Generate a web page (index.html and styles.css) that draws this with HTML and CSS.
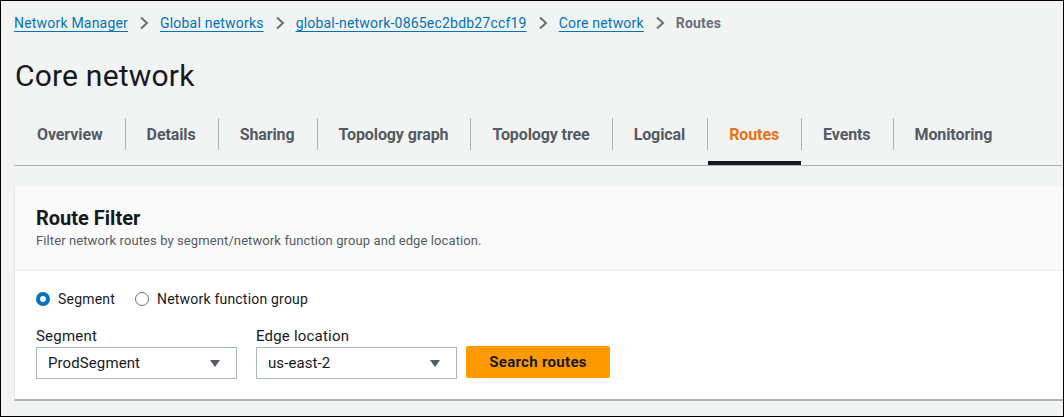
FILE: index.html
```html
<!DOCTYPE html>
<html lang="en">

<head>
  <meta charset="UTF-8" />
  <meta name="viewport" content="width=device-width, initial-scale=1.0" />
  <title>Core network - Routes</title>
  <link rel="stylesheet" href="styles.css">
</head>

<body>
  <div class="page">
    <!-- breadcrumbs -->
    <div class="crumbs">
      <a href="javascript:;">Network Manager</a>
      <span class="chev"><svg width="10" height="14" viewBox="0 0 10 14"><path d="M2 1.5 L8 7 L2 12.5" fill="none" stroke="#687078" stroke-width="2"/></svg></span>
      <a href="javascript:;">Global networks</a>
      <span class="chev"><svg width="10" height="14" viewBox="0 0 10 14"><path d="M2 1.5 L8 7 L2 12.5" fill="none" stroke="#687078" stroke-width="2"/></svg></span>
      <a href="javascript:;">global-network-0865ec2bdb27ccf19</a>
      <span class="chev"><svg width="10" height="14" viewBox="0 0 10 14"><path d="M2 1.5 L8 7 L2 12.5" fill="none" stroke="#687078" stroke-width="2"/></svg></span>
      <a href="javascript:;">Core network</a>
      <span class="chev"><svg width="10" height="14" viewBox="0 0 10 14"><path d="M2 1.5 L8 7 L2 12.5" fill="none" stroke="#687078" stroke-width="2"/></svg></span>
      <span class="current">Routes</span>
    </div>

    <h1 class="title">Core network</h1>

    <!-- tabs -->
    <ul class="tabs">
      <li><a href="javascript:;">Overview</a></li>
      <li><a href="javascript:;">Details</a></li>
      <li><a href="javascript:;">Sharing</a></li>
      <li><a href="javascript:;">Topology graph</a></li>
      <li><a href="javascript:;">Topology tree</a></li>
      <li><a href="javascript:;">Logical</a></li>
      <li class="active"><a href="javascript:;">Routes</a></li>
      <li><a href="javascript:;">Events</a></li>
      <li><a href="javascript:;">Monitoring</a></li>
    </ul>

    <!-- filter card -->
    <div class="card">
      <div class="card-head">
        <h2>Route Filter</h2>
        <p>Filter network routes by segment/network function group and edge location.</p>
      </div>
      <div class="card-body">
        <div class="radios">
          <label class="radio checked"><span class="dot"></span>Segment</label>
          <label class="radio"><span class="dot"></span>Network function group</label>
        </div>
        <div class="fields">
          <div class="field">
            <div class="label">Segment</div>
            <div class="select">ProdSegment<span class="caret"></span></div>
          </div>
          <div class="field">
            <div class="label">Edge location</div>
            <div class="select">us-east-2<span class="caret"></span></div>
          </div>
          <button class="btn">Search routes</button>
        </div>
      </div>
    </div>
  </div>
</body>

</html>
```

FILE: styles.css
```css
* {
  margin: 0;
  padding: 0;
  box-sizing: border-box;
}

body {
  width: 1064px;
  height: 417px;
  overflow: hidden;
  font-family: Roboto, "Liberation Sans", sans-serif;
  color: #16191f;
}

.page {
  height: 417px;
  border: 1px solid #000;
  background: #f2f3f3;
  padding-left: 13px;
  overflow: hidden;
}

/* breadcrumbs */
.crumbs {
  display: flex;
  align-items: center;
  height: 44px;
  font-size: 14px;
  letter-spacing: 0.2px;
}

.crumbs a {
  color: #0073bb;
  text-decoration: underline;
  text-underline-offset: 3px;
}

.crumbs .chev {
  display: flex;
  margin: 0 11px;
}

.crumbs .current {
  color: #687078;
  font-weight: bold;
}

.title {
  font-size: 30px;
  font-weight: normal;
  letter-spacing: 0.2px;
  line-height: 36px;
  margin-top: 13px;
  margin-left: 1px;
}

/* tabs */
.tabs {
  list-style: none;
  display: flex;
  margin-top: 14px;
  height: 58px;
  padding-top: 10px;
  border-bottom: 1px solid #aab7b8;
}

.tabs li {
  position: relative;
  padding: 7px 22px 0;
  height: 47px;
}

.tabs li:first-child {
  margin-left: 1px;
}

.tabs li:not(:first-child) {
  background: linear-gradient(#aab7b8, #aab7b8) no-repeat left top / 1px 32px;
}

.tabs li a {
  display: block;
  line-height: 20px;
  text-decoration: none;
  color: #545b64;
  font-size: 16px;
  font-weight: bold;
  letter-spacing: -0.1px;
}

.tabs li.active a {
  color: #ec7211;
}

.tabs li.active::after {
  content: "";
  position: absolute;
  left: 1px;
  right: 0;
  bottom: 0;
  height: 4px;
  background: #16191f;
}

/* card */
.card {
  margin-top: 21px;
  background: #fff;
  border-left: 1px solid #e4e6e6;
  border-bottom: 2px solid #aab7b8;
  margin-right: -4px;
}

.card-head {
  background: #fafafa;
  padding: 19px 21px 0;
  border-bottom: 1px solid #eaeded;
  height: 84px;
}

.card-head h2 {
  font-size: 20px;
  font-weight: bold;
  line-height: 24px;
}

.card-head p {
  font-size: 13px;
  color: #545b64;
  line-height: 18px;
  margin-top: 2px;
  letter-spacing: 0.1px;
}

.card-body {
  padding: 18px 21px 20px;
  font-size: 14px;
}

.radios {
  display: flex;
  gap: 20px;
  height: 20px;
  align-items: center;
}

.radio {
  display: flex;
  align-items: center;
  letter-spacing: 0.2px;
}

.radio .dot {
  width: 14px;
  height: 14px;
  border-radius: 50%;
  border: 1px solid #687078;
  margin-right: 8px;
}

.radio.checked .dot {
  border: 4px solid #0073bb;
}

.fields {
  display: flex;
  align-items: flex-end;
  margin-top: 17px;
}

.field {
  margin-right: 19px;
}

.field:nth-child(2) {
  margin-right: 9px;
}

.label {
  font-size: 15px;
  line-height: 20px;
  margin-bottom: 1px;
  letter-spacing: 0.2px;
}

.select {
  position: relative;
  width: 201px;
  height: 32px;
  line-height: 30px;
  border: 1px solid #aab7b8;
  padding-left: 11px;
  background: #fff;
  font-size: 15px;
  letter-spacing: 0.1px;
}

.select .caret {
  position: absolute;
  right: 16px;
  top: 12px;
  width: 0;
  height: 0;
  border-left: 5px solid transparent;
  border-right: 5px solid transparent;
  border-top: 7px solid #545b64;
}

.btn {
  width: 144px;
  height: 32px;
  margin-bottom: 1px;
  border: none;
  border-radius: 2px;
  background: #ff9900;
  color: #16191f;
  font-family: inherit;
  font-size: 15px;
  font-weight: bold;
  letter-spacing: 0.3px;
}
```
